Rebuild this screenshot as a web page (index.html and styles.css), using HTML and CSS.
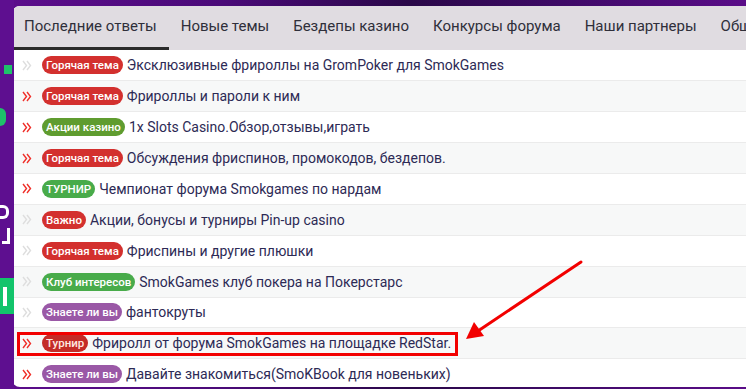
FILE: index.html
```html
<!DOCTYPE html>
<html lang="ru">
<head>
  <meta charset="UTF-8">
  <title>SmokGames — Последние ответы</title>
  <link rel="stylesheet" href="styles.css">
</head>
<body>

  <!-- Background decoration on the left -->
  <div class="bg-deco">
    <div class="deco deco-green1"></div>
    <div class="deco deco-green2"></div>
    <div class="deco deco-white1"></div>
    <div class="deco deco-white2"></div>
    <div class="deco deco-green3"><div class="deco-bar"></div></div>
  </div>

  <div class="panel">
    <div class="tabs">
      <div class="tab active">Последние ответы</div>
      <div class="tab">Новые темы</div>
      <div class="tab">Бездепы казино</div>
      <div class="tab">Конкурсы форума</div>
      <div class="tab">Наши партнеры</div>
      <div class="tab">Общение</div>
    </div>

    <div class="rows">
      <div class="row">
        <svg class="ico read" viewBox="0 0 10 11"><polyline points="1,1 4.5,5.5 1,10"/><polyline points="5,1 8.5,5.5 5,10"/></svg>
        <span class="badge red">Горячая тема</span>
        <span class="title">Эксклюзивные фрироллы на GromPoker для SmokGames</span>
      </div>
      <div class="row">
        <svg class="ico" viewBox="0 0 10 11"><polyline points="1,1 4.5,5.5 1,10"/><polyline points="5,1 8.5,5.5 5,10"/></svg>
        <span class="badge red">Горячая тема</span>
        <span class="title">Фрироллы и пароли к ним</span>
      </div>
      <div class="row">
        <svg class="ico" viewBox="0 0 10 11"><polyline points="1,1 4.5,5.5 1,10"/><polyline points="5,1 8.5,5.5 5,10"/></svg>
        <span class="badge olive">Акции казино</span>
        <span class="title">1x Slots Casino.Обзор,отзывы,играть</span>
      </div>
      <div class="row">
        <svg class="ico" viewBox="0 0 10 11"><polyline points="1,1 4.5,5.5 1,10"/><polyline points="5,1 8.5,5.5 5,10"/></svg>
        <span class="badge red">Горячая тема</span>
        <span class="title">Обсуждения фриспинов, промокодов, бездепов.</span>
      </div>
      <div class="row">
        <svg class="ico" viewBox="0 0 10 11"><polyline points="1,1 4.5,5.5 1,10"/><polyline points="5,1 8.5,5.5 5,10"/></svg>
        <span class="badge green">ТУРНИР</span>
        <span class="title">Чемпионат форума Smokgames по нардам</span>
      </div>
      <div class="row">
        <svg class="ico read" viewBox="0 0 10 11"><polyline points="1,1 4.5,5.5 1,10"/><polyline points="5,1 8.5,5.5 5,10"/></svg>
        <span class="badge red">Важно</span>
        <span class="title">Акции, бонусы и турниры Pin-up casino</span>
      </div>
      <div class="row">
        <svg class="ico read" viewBox="0 0 10 11"><polyline points="1,1 4.5,5.5 1,10"/><polyline points="5,1 8.5,5.5 5,10"/></svg>
        <span class="badge red">Горячая тема</span>
        <span class="title">Фриспины и другие плюшки</span>
      </div>
      <div class="row">
        <svg class="ico read" viewBox="0 0 10 11"><polyline points="1,1 4.5,5.5 1,10"/><polyline points="5,1 8.5,5.5 5,10"/></svg>
        <span class="badge green">Клуб интересов</span>
        <span class="title">SmokGames клуб покера на Покерстарс</span>
      </div>
      <div class="row">
        <svg class="ico read" viewBox="0 0 10 11"><polyline points="1,1 4.5,5.5 1,10"/><polyline points="5,1 8.5,5.5 5,10"/></svg>
        <span class="badge purple">Знаете ли вы</span>
        <span class="title">фантокруты</span>
      </div>
      <div class="row">
        <svg class="ico" viewBox="0 0 10 11"><polyline points="1,1 4.5,5.5 1,10"/><polyline points="5,1 8.5,5.5 5,10"/></svg>
        <span class="badge dark-red">Турнир</span>
        <span class="title">Фриролл от форума SmokGames на площадке RedStar.</span>
      </div>
      <div class="row">
        <svg class="ico" viewBox="0 0 10 11"><polyline points="1,1 4.5,5.5 1,10"/><polyline points="5,1 8.5,5.5 5,10"/></svg>
        <span class="badge purple">Знаете ли вы</span>
        <span class="title">Давайте знакомиться(SmoKBook для новеньких)</span>
      </div>
    </div>
  </div>

  <!-- Screenshot annotation: box and arrow -->
  <div class="mark-box"></div>
  <svg class="mark-arrow" width="746" height="389" viewBox="0 0 746 389">
    <line x1="581" y1="262" x2="478" y2="331" />
    <polygon points="466,339 474,322 484,336" />
  </svg>

</body>
</html>
```

FILE: styles.css
```css
body {
  margin: 0;
  width: 746px;
  height: 389px;
  overflow: hidden;
  position: relative;
  font-family: Roboto, "Noto Sans", Arial, sans-serif;
  background: linear-gradient(90deg, #5c0d8c 0%, #4a0a78 30%, #2a0848 55%, #3e0a66 75%, #5a0c88 100%);
}

.bg-deco {
  position: absolute;
  left: 0;
  top: 0;
  width: 14px;
  height: 389px;
  background: #5e0f90;
  overflow: hidden;
}

.deco {
  position: absolute;
}

.deco-green1 {
  left: 4px;
  top: 65px;
  width: 8px;
  height: 9px;
  background: #1ec26a;
}

.deco-green2 {
  left: 0;
  top: 108px;
  width: 6px;
  height: 18px;
  background: #1ec26a;
  border-radius: 0 8px 8px 0;
}

.deco-white1 {
  left: 0;
  top: 205px;
  width: 9px;
  height: 14px;
  border: 3px solid #fff;
  border-left: none;
  border-radius: 0 6px 6px 0;
  box-sizing: border-box;
}

.deco-white2 {
  left: 2px;
  top: 228px;
  width: 8px;
  height: 16px;
  border-right: 3px solid #fff;
  border-bottom: 3px solid #fff;
  box-sizing: border-box;
}

.deco-green3 {
  left: 0;
  top: 278px;
  width: 14px;
  height: 36px;
  background: #12c46b;
}

.deco-bar {
  margin: 9px 0 0 3px;
  width: 4px;
  height: 19px;
  background: #fff;
}

.panel {
  margin: 6px 0 0 12px;
  width: 760px;
  height: 381px;
  background: #fff;
  border-radius: 8px 0 0 8px;
  overflow: hidden;
}

.tabs {
  display: flex;
  height: 44px;
  background: #e0dce1;
  white-space: nowrap;
}

.tab {
  padding: 0 12px;
  font-size: 15px;
  line-height: 41px;
  color: #2f2f3a;
  border-bottom: 3px solid transparent;
}

.tab.active {
  border-bottom-color: #2b2b2b;
}

.rows {
  display: flex;
  flex-direction: column;
}

.row {
  display: flex;
  align-items: center;
  height: 30.9px;
  box-sizing: border-box;
  border-top: 1px solid #ebebeb;
  padding-left: 10px;
  white-space: nowrap;
}

.row:first-child {
  border-top: none;
  height: 30.3px;
}

.row:nth-child(even) {
  background: #f7f8f8;
}

.ico {
  width: 10px;
  height: 11px;
  margin-right: 10px;
  fill: none;
  stroke: #f0302a;
  stroke-width: 1.4;
}

.ico.read {
  stroke: #dedede;
}

.badge {
  display: inline-block;
  height: 18px;
  line-height: 18px;
  padding: 0 4px;
  border-radius: 9px;
  color: #fff;
  font-size: 11.5px;
  font-weight: 500;
  margin-right: 4px;
}

.badge.red { background: #d3302e; }
.badge.dark-red { background: #c42b27; color: #ffe9e0; }
.badge.olive { background: #5f9c2f; }
.badge.green { background: #48ab4a; }
.badge.purple { background: #9a58a6; }

.title {
  font-size: 14px;
  color: #2d2a55;
}

.mark-box {
  position: absolute;
  left: 17px;
  top: 332px;
  width: 435px;
  height: 18px;
  border: 3px solid #f20000;
}

.mark-arrow {
  position: absolute;
  left: 0;
  top: 0;
}

.mark-arrow line {
  stroke: #f20000;
  stroke-width: 3;
  stroke-linecap: round;
}

.mark-arrow polygon {
  fill: #f20000;
}
```
